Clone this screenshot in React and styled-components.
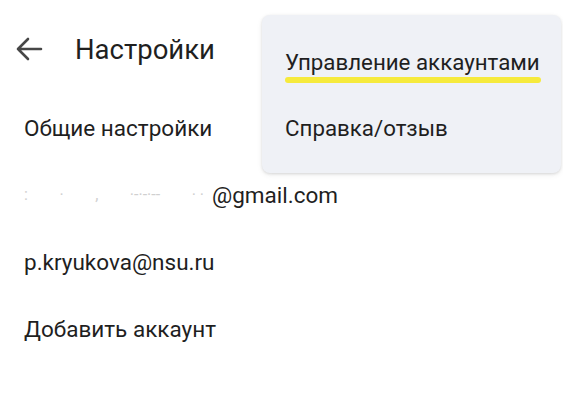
import React from "react";
import styled, { createGlobalStyle } from "styled-components";

const GlobalStyle = createGlobalStyle`
  html, body {
    margin: 0;
    padding: 0;
    background: #ffffff;
  }
  body {
    font-family: Roboto, "Noto Sans", Arial, sans-serif;
    color: #1f1f1f;
  }
`;

const Page = styled.div`
  position: relative;
  width: 563px;
  height: 403px;
  overflow: hidden;
  background: #fff;
`;

const Header = styled.div`
  display: flex;
  align-items: center;
  height: 50px;
  margin-top: 24px;
  padding-left: 15px;
  gap: 32px;
`;

const BackButton = styled.div`
  width: 28px;
  height: 24px;
  display: flex;
  align-items: center;
  justify-content: center;
  color: #474747;
`;

const Title = styled.h1`
  margin: 0;
  font-size: 27.5px;
  font-weight: 400;
  color: #1f1f1f;
`;

const List = styled.div`
  display: flex;
  flex-direction: column;
  margin-top: 20px;
`;

const Row = styled.div`
  height: 67px;
  display: flex;
  align-items: center;
  padding-left: 24px;
  font-size: 22.5px;
  color: #1f1f1f;
  white-space: nowrap;
`;

/* blurred-out part of the address */
const Hidden = styled.span`
  display: flex;
  justify-content: space-between;
  width: 180px;
  margin-right: 8px;
  color: #d0d0d0;
  font-size: 16px;
`;

const Menu = styled.div`
  position: absolute;
  top: 15px;
  left: 262px;
  width: 299px;
  box-sizing: border-box;
  padding: 14px 0 12px;
  background: #eff1f6;
  border-radius: 8px;
  box-shadow: 0 1px 3px rgba(0, 0, 0, 0.12), 0 2px 6px rgba(0, 0, 0, 0.06);
`;

const MenuItem = styled.div`
  height: 66px;
  display: flex;
  align-items: center;
  padding-left: 23px;
  font-size: 22.3px;
  color: #1f1f1f;
  white-space: nowrap;
`;

const Marked = styled.span`
  position: relative;

  &::after {
    content: "";
    position: absolute;
    left: 0;
    right: -1px;
    bottom: -8px;
    height: 6px;
    border-radius: 3px;
    background: #f6ea3c;
  }
`;

const ArrowBack = () => (
  <svg width="28" height="24" viewBox="0 0 28 24" fill="none">
    <path
      d="M26 12H3M13 2L3 12l10 10"
      stroke="currentColor"
      strokeWidth="2.6"
      strokeLinecap="round"
      strokeLinejoin="round"
    />
  </svg>
);

export default function App() {
  return (
    <Page>
      <GlobalStyle />
      <Header>
        <BackButton>
          <ArrowBack />
        </BackButton>
        <Title>Настройки</Title>
      </Header>
      <List>
        <Row>Общие настройки</Row>
        <Row>
          <Hidden>
            <span>:</span>
            <span>·</span>
            <span>,</span>
            <span>·-·-·--</span>
            <span>· ·</span>
          </Hidden>
          <span>@gmail.com</span>
        </Row>
        <Row>p.kryukova@nsu.ru</Row>
        <Row>Добавить аккаунт</Row>
      </List>
      <Menu>
        <MenuItem>
          <Marked>Управление аккаунтами</Marked>
        </MenuItem>
        <MenuItem>Справка/отзыв</MenuItem>
      </Menu>
    </Page>
  );
}
